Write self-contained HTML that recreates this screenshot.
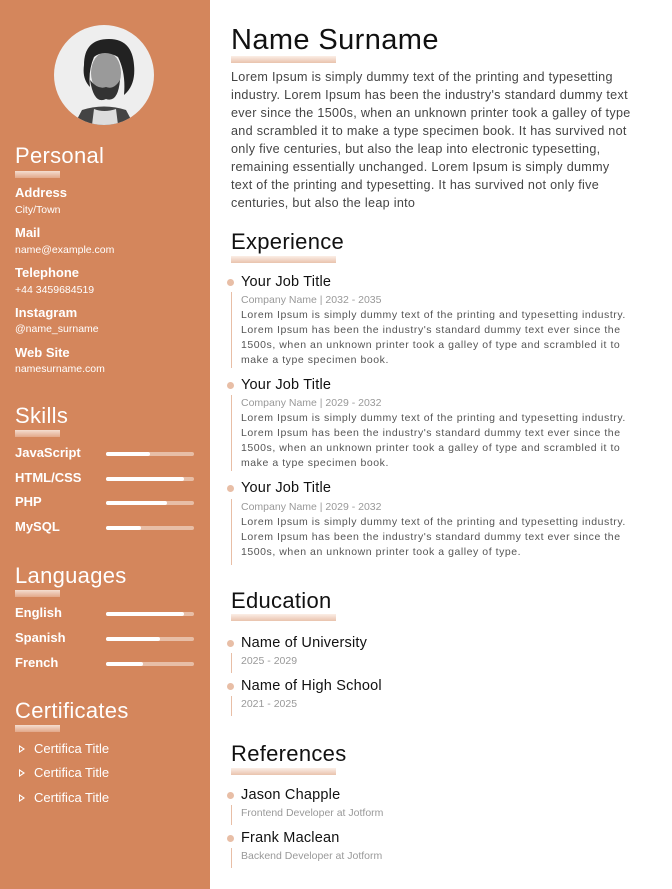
<!DOCTYPE html>
<html><head><meta charset="utf-8"><style>
*{margin:0;padding:0;box-sizing:border-box}
body{width:672px;height:889px;position:relative;background:#fff;font-family:"Liberation Sans",sans-serif;overflow:hidden}
.sb{position:absolute;left:0;top:0;width:210px;height:889px;background:#d4865c}
.a{position:absolute;white-space:nowrap}
.st{color:#fff;font-size:22px;left:15px;line-height:26px;letter-spacing:0.3px}
.bar{position:absolute;left:15px;width:45px;height:7px;background:linear-gradient(#f4ddd0,#e2a88a)}
.lb{color:#fff;font-weight:bold;font-size:13px;left:15px;line-height:16px}
.vl{color:#fff;font-size:10.5px;left:15px;line-height:14px}
.tr{position:absolute;left:106px;width:88px;height:4px;border-radius:2px;background:#e8bea6}
.tr i{display:block;height:4px;border-radius:2px;background:#fff}
.ct{color:#fff;font-size:13px;left:34px;line-height:16px}
.tri{position:absolute;left:19px;width:0;height:0;border-left:6px solid #fff;border-top:4px solid transparent;border-bottom:4px solid transparent}
.tri:after{content:"";position:absolute;left:-5px;top:-2px;border-left:3px solid #d4865c;border-top:2px solid transparent;border-bottom:2px solid transparent}
.mh{left:231px;font-size:22px;color:#111;line-height:26px;letter-spacing:0.3px}
.mbar{position:absolute;left:231px;width:105px;height:7px;background:linear-gradient(#fbeee6,#e9c3ad)}
.p{left:231px;font-size:12.6px;color:#444;line-height:18px;letter-spacing:0.3px}
.jt{left:241px;font-size:14.5px;color:#111;line-height:18px;letter-spacing:0.2px}
.co{left:241px;font-size:10.5px;color:#999;line-height:14px}
.ds{left:241px;font-size:10.5px;color:#555;line-height:15px;letter-spacing:0.55px}
.dot{position:absolute;left:227px;width:7px;height:7px;border-radius:50%;background:#e8bea6}
.vline{position:absolute;left:231px;width:1px;background:#e8bea6}
</style></head><body>
<div class="sb"></div>
<svg class="a" style="left:54px;top:25px" width="100" height="100" viewBox="0 0 100 100">
<defs><clipPath id="c"><circle cx="50" cy="50" r="50"/></clipPath></defs>
<g clip-path="url(#c)">
<rect width="100" height="100" fill="#eeeeee"/>
<path d="M20 100 L28 85 Q50 78 72 85 L80 100Z" fill="#444"/>
<path d="M38 100 L40 84 Q50 88 62 84 L64 100Z" fill="#ddd"/>
<ellipse cx="52" cy="48" rx="15" ry="21" fill="#9a9a9a"/>
<path d="M36 55 Q40 80 52 74 Q64 78 66 55 Q60 65 52 62 Q44 65 36 55Z" fill="#333"/>
<path d="M30 40 Q30 14 55 14 Q78 14 80 40 Q82 60 70 70 Q72 48 64 32 Q50 24 40 32 Q34 46 36 62 Q28 54 30 40Z" fill="#222"/>
</g></svg>
<div class="a st" style="top:143px">Personal</div><div class="bar" style="top:171px"></div>
<div class="a lb" style="top:185px">Address</div><div class="a vl" style="top:203px">City/Town</div>
<div class="a lb" style="top:225px">Mail</div><div class="a vl" style="top:243px">name@example.com</div>
<div class="a lb" style="top:265px">Telephone</div><div class="a vl" style="top:283px">+44 3459684519</div>
<div class="a lb" style="top:305px">Instagram</div><div class="a vl" style="top:322px">@name_surname</div>
<div class="a lb" style="top:345px">Web Site</div><div class="a vl" style="top:362px">namesurname.com</div>
<div class="a st" style="top:403px">Skills</div><div class="bar" style="top:430px"></div>
<div class="a lb" style="top:445px">JavaScript</div><div class="tr" style="top:452px"><i style="width:44px"></i></div>
<div class="a lb" style="top:470px">HTML/CSS</div><div class="tr" style="top:477px"><i style="width:78px"></i></div>
<div class="a lb" style="top:494px">PHP</div><div class="tr" style="top:501px"><i style="width:61px"></i></div>
<div class="a lb" style="top:519px">MySQL</div><div class="tr" style="top:526px"><i style="width:35px"></i></div>
<div class="a st" style="top:563px">Languages</div><div class="bar" style="top:590px"></div>
<div class="a lb" style="top:605px">English</div><div class="tr" style="top:612px"><i style="width:78px"></i></div>
<div class="a lb" style="top:630px">Spanish</div><div class="tr" style="top:637px"><i style="width:54px"></i></div>
<div class="a lb" style="top:655px">French</div><div class="tr" style="top:662px"><i style="width:37px"></i></div>
<div class="a st" style="top:698px">Certificates</div><div class="bar" style="top:725px"></div>
<div class="tri" style="top:745px"></div><div class="a ct" style="top:741px">Certifica Title</div>
<div class="tri" style="top:769px"></div><div class="a ct" style="top:765px">Certifica Title</div>
<div class="tri" style="top:794px"></div><div class="a ct" style="top:790px">Certifica Title</div>

<div class="a" style="left:231px;top:22px;font-size:29px;color:#111;line-height:36px;letter-spacing:0.4px">Name Surname</div>
<div class="mbar" style="top:56px"></div>
<div class="a p" style="top:68px">Lorem Ipsum is simply dummy text of the printing and typesetting<br>industry. Lorem Ipsum has been the industry's standard dummy text<br>ever since the 1500s, when an unknown printer took a galley of type<br>and scrambled it to make a type specimen book. It has survived not<br>only five centuries, but also the leap into electronic typesetting,<br>remaining essentially unchanged. Lorem Ipsum is simply dummy<br>text of the printing and typesetting. It has survived not only five<br>centuries, but also the leap into</div>

<div class="a mh" style="top:229px">Experience</div><div class="mbar" style="top:256px"></div>
<div class="dot" style="top:279px"></div><div class="vline" style="top:292px;height:76px"></div>
<div class="a jt" style="top:273px">Your Job Title</div>
<div class="a co" style="top:293px">Company Name | 2032 - 2035</div>
<div class="a ds" style="top:308px">Lorem Ipsum is simply dummy text of the printing and typesetting industry.<br>Lorem Ipsum has been the industry's standard dummy text ever since the<br>1500s, when an unknown printer took a galley of type and scrambled it to<br>make a type specimen book.</div>
<div class="dot" style="top:382px"></div><div class="vline" style="top:395px;height:76px"></div>
<div class="a jt" style="top:376px">Your Job Title</div>
<div class="a co" style="top:396px">Company Name | 2029 - 2032</div>
<div class="a ds" style="top:411px">Lorem Ipsum is simply dummy text of the printing and typesetting industry.<br>Lorem Ipsum has been the industry's standard dummy text ever since the<br>1500s, when an unknown printer took a galley of type and scrambled it to<br>make a type specimen book.</div>
<div class="dot" style="top:485px"></div><div class="vline" style="top:499px;height:66px"></div>
<div class="a jt" style="top:479px">Your Job Title</div>
<div class="a co" style="top:500px">Company Name | 2029 - 2032</div>
<div class="a ds" style="top:515px">Lorem Ipsum is simply dummy text of the printing and typesetting industry.<br>Lorem Ipsum has been the industry's standard dummy text ever since the<br>1500s, when an unknown printer took a galley of type.</div>

<div class="a mh" style="top:588px">Education</div><div class="mbar" style="top:614px"></div>
<div class="dot" style="top:640px"></div><div class="vline" style="top:653px;height:20px"></div>
<div class="a jt" style="top:634px">Name of University</div>
<div class="a co" style="top:654px">2025 - 2029</div>
<div class="dot" style="top:683px"></div><div class="vline" style="top:696px;height:20px"></div>
<div class="a jt" style="top:677px">Name of High School</div>
<div class="a co" style="top:697px">2021 - 2025</div>

<div class="a mh" style="top:741px">References</div><div class="mbar" style="top:768px"></div>
<div class="dot" style="top:792px"></div><div class="vline" style="top:805px;height:20px"></div>
<div class="a jt" style="top:786px">Jason Chapple</div>
<div class="a co" style="top:806px">Frontend Developer at Jotform</div>
<div class="dot" style="top:835px"></div><div class="vline" style="top:848px;height:20px"></div>
<div class="a jt" style="top:829px">Frank Maclean</div>
<div class="a co" style="top:849px">Backend Developer at Jotform</div>
</body></html>
